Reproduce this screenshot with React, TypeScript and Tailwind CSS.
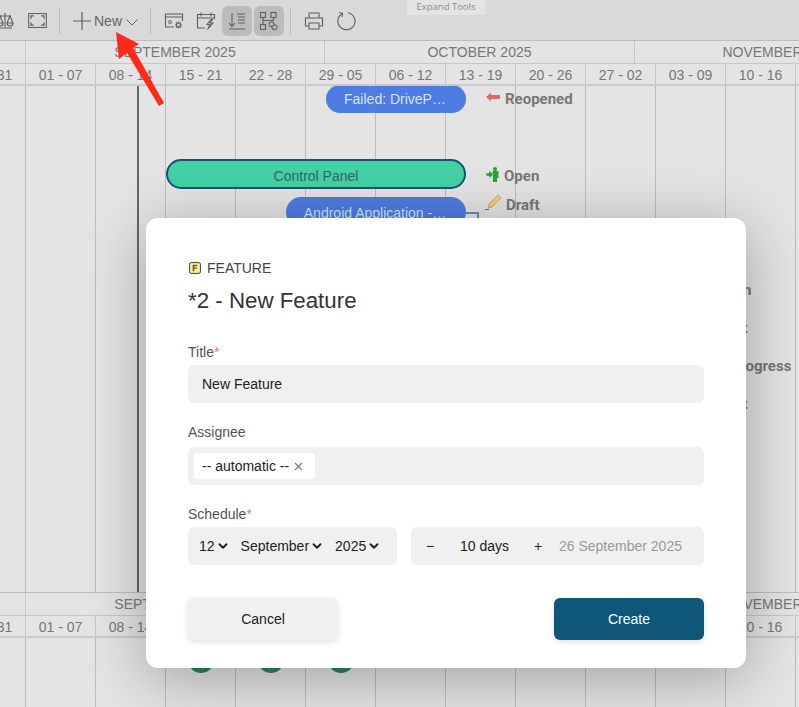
import React from "react";
import { ChevronDown, X } from "lucide-react";

const weeks = ["25 - 31", "01 - 07", "08 - 14", "15 - 21", "22 - 28", "29 - 05", "06 - 12", "13 - 19", "20 - 26", "27 - 02", "03 - 09", "10 - 16", "17 - 23"];

const Sep = () => <div className="w-px h-[26px] bg-[#b9b9b9] shrink-0" />;

function ToolIcon({ children, className = "" }: { children: React.ReactNode; className?: string }) {
  return (
    <svg viewBox="0 0 20 20" fill="none" stroke="#5f5f5f" strokeWidth="1.1" className={`w-5 h-5 shrink-0 ${className}`}>
      {children}
    </svg>
  );
}

function Toolbar() {
  return (
    <div className="h-10 shrink-0 bg-[#d9d9d9] flex items-center relative pt-[1px]">
      <ToolIcon className="ml-[-5px]">
        <path d="M10 2v14M3 17h14M4 5h12M5 5l-3 7h6zM15 5l-3 7h6zM2 12a3 3 0 0 0 6 0M12 12a3 3 0 0 0 6 0" />
      </ToolIcon>
      <svg viewBox="0 0 20 16" fill="none" stroke="#5f5f5f" strokeWidth="1.1" className="w-[19px] h-[15px] ml-[13px] shrink-0">
        <rect x="0.6" y="0.6" width="18.8" height="14.8" />
        <path d="M3 6V3h3M14 3h3v3M17 10v3h-3M6 13H3v-3" strokeWidth="1.4" />
      </svg>
      <div className="ml-3"><Sep /></div>
      <svg viewBox="0 0 18 18" fill="none" stroke="#5f5f5f" strokeWidth="1.2" className="w-[18px] h-[18px] ml-[13px] shrink-0">
        <path d="M9 0v18M0 9h18" />
      </svg>
      <span className="ml-[3px] mt-[1px] text-[14px] text-[#666] font-['Liberation_Sans',sans-serif]">New</span>
      <svg viewBox="0 0 12 7" fill="none" stroke="#5f5f5f" strokeWidth="1" className="w-3 h-[7px] ml-1 mt-[3px] shrink-0">
        <path d="M0.5 0.5 6 6l5.5-5.5" />
      </svg>
      <div className="ml-3"><Sep /></div>
      <ToolIcon className="ml-[13px]">
        <path d="M10 16H1.5V3h17v7M1.5 6h17" />
        <path d="M6 9l.6 1.2 1.3.2-1 .9.3 1.3L6 12l-1.2.6.3-1.3-1-.9 1.3-.2z" strokeWidth=".8" />
        <circle cx="14.5" cy="14" r="2" />
        <path d="M14.5 10.5v1.5M14.5 16v1.500M11 14h1.500M16.500 14H18M12 11.500l1 1M16 15.500l1 1M17 11.500l-1 1M13 15.500l-1 1" />
      </ToolIcon>
      <ToolIcon className="ml-3">
        <path d="M9 17H1.500V3.500h17V8M1.500 7h17M5 1.500v4M15 1.500v4" />
        <path d="M15 8.500l-4 5h3l-2.500 5 5.500-6.500h-3l2.500-3.500z" />
      </ToolIcon>
      <div className="ml-[6px] w-[30px] h-[30px] rounded-md bg-[#bcbcbc] flex items-center justify-center">
        <ToolIcon>
          <path d="M5 2v13M2 12l3 3.500L8 12M10 3h8M11 6h7M11 9h7M11 12h7M2 18h16" />
        </ToolIcon>
      </div>
      <div className="ml-[2px] w-[30px] h-[30px] rounded-md bg-[#bcbcbc] flex items-center justify-center">
        <ToolIcon>
          <rect x="1.500" y="1.500" width="5" height="5" />
          <rect x="12" y="1.500" width="5" height="5" />
          <rect x="1.500" y="13.500" width="5" height="5" />
          <path d="M4 6.500v7M4 9.500h10.500v-3" />
          <path d="M10 13.500a2.500 2.500 0 0 1 5 0c0 2-3 2.500-5 1M13 15.500a2.500 2.500 0 0 0 5 1c.5-2-2-3-3.500-2.500" />
        </ToolIcon>
      </div>
      <div className="ml-[6px]"><Sep /></div>
      <ToolIcon className="ml-[13px]">
        <path d="M5 7V2h10v5M5 15H1.500V7h17v8H15M5 12h10v6H5z" />
      </ToolIcon>
      <ToolIcon className="ml-3">
        <path d="M6.500 2.500A8.600 8.600 0 1 0 12 1.700M3.500 1.500L6.500 2.500 6 6" />
      </ToolIcon>
      <div className="absolute left-[407px] top-0 w-[78px] h-[15px] bg-[#e4e4e4] flex items-center justify-center text-[9.5px] text-[#8c8c8c] font-['Open_Sans',sans-serif]">
        Expand Tools
      </div>
    </div>
  );
}

function HeaderRows() {
  return (
    <div className="shrink-0 bg-[#e4e4e4] font-['Liberation_Sans',sans-serif] text-[14px] text-[#777] border-t border-[#bdbdbd]">
      <div className="h-[23px] flex border-b border-[#c6c6c6]">
        <div className="w-[26px] shrink-0 border-r border-[#c6c6c6]" />
        <div className="w-[299px] shrink-0 border-r border-[#c6c6c6] flex items-center justify-center">SEPTEMBER 2025</div>
        <div className="w-[310px] shrink-0 border-r border-[#c6c6c6] flex items-center justify-center">OCTOBER 2025</div>
        <div className="w-[290px] shrink-0 flex items-center justify-center">NOVEMBER 2025</div>
      </div>
      <div className="h-[22px] flex ml-[-44px] border-b-2 border-[#cbcbcb]">
        {weeks.map((w) => (
          <div key={w} className="w-[70px] shrink-0 border-r border-[#c6c6c6] flex items-center justify-center pt-[2px]">{w}</div>
        ))}
      </div>
    </div>
  );
}

function GridLines() {
  return (
    <div className="absolute inset-0 flex ml-[-44px]">
      {weeks.map((w) => (
        <div key={w} className="w-[70px] shrink-0 border-r border-[#bcbcbc]" />
      ))}
    </div>
  );
}

function Status({ top, left, children }: { top: number; left: number; children: React.ReactNode }) {
  return (
    <div
      className="absolute flex items-center gap-[5px] text-[15px] font-bold text-[#777] font-['Roboto',sans-serif] whitespace-nowrap"
      style={{ top, left }}
    >
      {children}
    </div>
  );
}

function Chart() {
  return (
    <div className="flex-1 relative bg-[#e4e4e4] overflow-hidden">
      <GridLines />
      <div className="absolute left-[137px] top-0 bottom-0 w-[2px] bg-[#666]" />

      <div className="absolute left-[326px] top-[-1px] w-[140px] h-[28px] rounded-full bg-[#4677e0]/95 text-[#d6e2fa] text-[14px] flex items-center justify-center pr-[2px] font-['Liberation_Sans',sans-serif]">
        Failed: DriveP…
      </div>
      <div className="absolute left-[166px] top-[73px] w-[300px] h-[30px] rounded-full bg-[#3bd09f]/95 border-2 border-[#1d4f7a] text-[#2d6b63] text-[14px] flex items-center justify-center pt-[5px] font-['Liberation_Sans',sans-serif]">
        Control Panel
      </div>
      <div className="absolute left-[286px] top-[111px] w-[180px] h-[30px] rounded-full bg-[#4677e0]/95 text-[#d6e2fa] text-[14px] flex items-center justify-center pr-[2px] pt-[2px] font-['Liberation_Sans',sans-serif]">
        Android Application -…
      </div>
      <div className="absolute left-[466px] top-[126px] w-[13px] h-[30px] border-t-2 border-r-2 border-[#6d8aa6]" />

      <Status top={2} left={486}>
        <svg viewBox="0 0 14 10" className="w-[14px] h-[10px] mb-[5px]"><path d="M0 5l5-4.500V3h9v4H5v2.500z" fill="#e2666c" /></svg>
        Reopened
      </Status>
      <Status top={79} left={486}>
        <svg viewBox="0 0 13 15" className="w-[13px] h-[15px] mb-[4px]">
          <path d="M6.500 4h6v7h-1.500v4H7z" fill="#2e9e3a" />
          <circle cx="9" cy="2" r="2" fill="#2e9e3a" />
          <path d="M0 6h3V3.500L7.500 7.500 3 11.500V9H0z" fill="#2e9e3a" stroke="#e4e4e4" strokeWidth=".5" />
        </svg>
        Open
      </Status>
      <Status top={108} left={485}>
        <svg viewBox="0 0 16 15" className="w-4 h-[15px] mb-[5px]">
          <path d="M4 9l9-9 3 3-9 9-4 1z" fill="#f0cd7d" stroke="#b88a3a" strokeWidth=".6" />
          <path d="M0 14h4v1H0z" fill="#a5672c" />
        </svg>
        Draft
      </Status>
      <Status top={193} left={716}>Open</Status>
      <Status top={231} left={714}>Draft</Status>
      <Status top={269} left={714}>In Progress</Status>
      <Status top={307} left={714}>Draft</Status>
    </div>
  );
}

function BottomChart() {
  return (
    <div className="h-[69px] shrink-0 relative bg-[#e4e4e4] overflow-hidden">
      <GridLines />
      <div className="absolute left-[188px] top-[9px] w-[26px] h-[26px] rounded-full bg-[#2f8656]" />
      <div className="absolute left-[258px] top-[9px] w-[26px] h-[26px] rounded-full bg-[#2f8656]" />
      <div className="absolute left-[328px] top-[9px] w-[26px] h-[26px] rounded-full bg-[#2f8656]" />
    </div>
  );
}

function Label({ children, required = false }: { children: string; required?: boolean }) {
  return (
    <div className="text-[14px] leading-[17px] text-[#555]">
      {children}
      {required && <span className="text-[#f07070]">*</span>}
    </div>
  );
}

function Drop({ children }: { children: string }) {
  return (
    <span className="flex items-center gap-[1px] text-[14px] text-[#222]">
      {children}
      <ChevronDown size={14} strokeWidth={3.2} />
    </span>
  );
}

function Modal() {
  return (
    <div className="absolute left-[146px] top-[218px] w-[600px] h-[450px] bg-white rounded-xl px-[42px] pt-[42px] shadow-[0_10px_60px_rgba(0,0,0,0.3)] font-['Liberation_Sans',sans-serif]">
      <div className="flex items-center gap-[6px] h-4 text-[14px] text-[#444]">
        <svg viewBox="0 0 13 13" className="w-3 h-3 ml-[1px]">
          <rect x=".6" y=".6" width="11.800" height="11.800" rx="2" fill="#f6ec9a" stroke="#333" strokeWidth="1" />
          <path d="M4 3h5v1.500H5.700v1.500H8.500v1.400H5.700V10H4z" fill="#6b5f1a" />
        </svg>
        FEATURE
      </div>
      <div className="mt-[12px] text-[22.3px] leading-[26px] text-[#333]">*2 - New Feature</div>

      <div className="mt-[30px]"><Label required>Title</Label></div>
      <div className="mt-[4px] h-[38px] rounded-md bg-[#f0f0f0] flex items-center px-[14px] text-[14px] text-[#222]">New Feature</div>

      <div className="mt-[21px]"><Label>Assignee</Label></div>
      <div className="mt-[6px] h-[38px] rounded-md bg-[#f0f0f0] flex items-center px-[6px]">
        <div className="h-[26px] w-[121px] rounded-sm bg-white flex items-center pl-2 gap-[3px] text-[14px] text-[#222]">
          -- automatic --
          <X size={13} className="text-[#777]" />
        </div>
      </div>

      <div className="mt-[21px]"><Label required>Schedule</Label></div>
      <div className="mt-[4px] flex gap-[14px]">
        <div className="w-[209px] h-[38px] rounded-md bg-[#f0f0f0] flex items-center pl-[11px] gap-[11px]">
          <Drop>12</Drop>
          <Drop>September</Drop>
          <Drop>2025</Drop>
        </div>
        <div className="flex-1 h-[38px] rounded-md bg-[#f0f0f0] flex items-center pl-[15px] text-[14px] text-[#222] whitespace-nowrap">
          <span className="w-[8px]">−</span>
          <span className="ml-[26px] w-[49px]">10 days</span>
          <span className="ml-[25px] w-[9px]">+</span>
          <span className="ml-[16px] text-[#999]">26 September 2025</span>
        </div>
      </div>

      <div className="mt-[33px] flex justify-between">
        <button className="w-[150px] h-[42px] rounded-md bg-[#f0f0f0] text-[14px] text-[#222] shadow-[0_2px_6px_rgba(0,0,0,0.12)]">Cancel</button>
        <button className="w-[150px] h-[42px] rounded-md bg-[#0f5779] text-[14px] text-white shadow-[0_2px_6px_rgba(0,0,0,0.12)]">Create</button>
      </div>
    </div>
  );
}

export default function App() {
  return (
    <div className="relative w-[799px] h-[707px] overflow-hidden flex flex-col bg-[#e4e4e4]">
      <Toolbar />
      <HeaderRows />
      <Chart />
      <HeaderRows />
      <BottomChart />
      <Modal />
      {/* annotation arrow drawn on top of the screenshot */}
      <svg viewBox="0 0 799 707" className="absolute inset-0 w-[799px] h-[707px] pointer-events-none">
        <path d="M116 32L139 44 133 48 164 103 159 106 127 53 119 59z" fill="#ff2a1a" />
      </svg>
    </div>
  );
}
